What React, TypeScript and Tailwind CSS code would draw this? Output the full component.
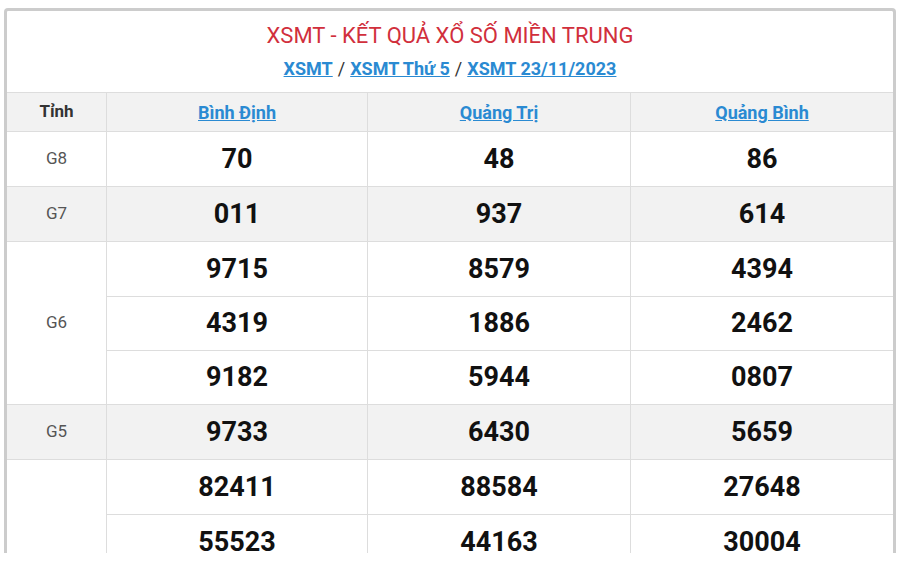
import React from 'react'

const provinces = ['Bình Định', 'Quảng Trị', 'Quảng Bình']

const prizes: { label: string; rows: string[][]; shade?: boolean }[] = [
  { label: 'G8', rows: [['70', '48', '86']] },
  { label: 'G7', rows: [['011', '937', '614']], shade: true },
  {
    label: 'G6',
    rows: [
      ['9715', '8579', '4394'],
      ['4319', '1886', '2462'],
      ['9182', '5944', '0807'],
    ],
  },
  { label: 'G5', rows: [['9733', '6430', '5659']], shade: true },
  {
    label: '',
    rows: [
      ['82411', '88584', '27648'],
      ['55523', '44163', '30004'],
    ],
  },
]

export default function App() {
  return (
    <div
      className="h-[553px] w-[900px] overflow-hidden bg-white"
      style={{ fontFamily: 'Roboto, "Noto Sans", sans-serif' }}
    >
      <div className="ml-[4px] mt-[8px] w-[892px] rounded-[4px] border-[3px] border-b-0 border-[#cccccc] bg-white">
        <div className="flex h-[81px] flex-col items-center pt-[10px]">
          <h1 className="text-[22px] leading-[30px] text-[#d12f3c]">
            XSMT - KẾT QUẢ XỔ SỐ MIỀN TRUNG
          </h1>
          <div className="mt-[6px] text-[18px] font-bold leading-[24px] text-[#333]">
            <a href="#" className="text-[#2a8ad2] underline">XSMT</a>
            <span className="mx-[5px] font-normal">/</span>
            <a href="#" className="text-[#2a8ad2] underline">XSMT Thứ 5</a>
            <span className="mx-[5px] font-normal">/</span>
            <a href="#" className="text-[#2a8ad2] underline">XSMT 23/11/2023</a>
          </div>
        </div>

        <div className="grid grid-cols-[100px_261px_263px_1fr] border-t border-[#dddddd]">
          <div className="flex h-[39px] items-center justify-center border-r border-b border-[#dddddd] bg-[#f2f2f2] text-[17px] font-bold text-[#333]">
            Tỉnh
          </div>
          {provinces.map((p, i) => (
            <div
              key={p}
              className={`flex h-[39px] items-center justify-center border-b border-[#dddddd] bg-[#f2f2f2] text-[18px] font-bold ${i < 2 ? 'border-r' : ''}`}
            >
              <a href="#" className="text-[#2a8ad2] underline">{p}</a>
            </div>
          ))}

          {prizes.map((prize) => (
            <React.Fragment key={prize.label + prize.rows[0][0]}>
              <div
                className={`flex items-center justify-center border-r border-b border-[#dddddd] text-[17px] text-[#555] ${prize.shade ? 'bg-[#f2f2f2]' : ''}`}
                style={{ gridRow: `span ${prize.rows.length}` }}
              >
                {prize.label}
              </div>
              {prize.rows.map((row, r) =>
                row.map((n, c) => (
                  <div
                    key={`${r}-${c}`}
                    className={`flex items-center justify-center border-b border-[#dddddd] text-[27px] font-bold leading-none text-[#111] ${r > 0 && prize.label === 'G6' ? 'h-[54px]' : 'h-[55px]'} ${c < 2 ? 'border-r' : ''} ${prize.shade ? 'bg-[#f2f2f2]' : ''}`}
                  >
                    {n}
                  </div>
                ))
              )}
            </React.Fragment>
          ))}
        </div>
      </div>
    </div>
  )
}
